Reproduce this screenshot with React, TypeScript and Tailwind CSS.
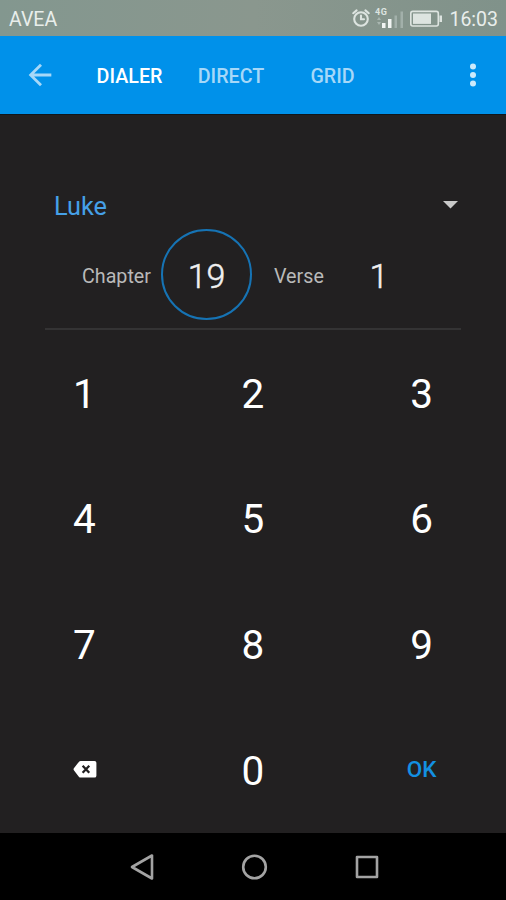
import React from "react";

const tabs = [
  { name: "DIALER", className: "w-[67px] text-white" },
  { name: "DIRECT", className: "ml-[34px] w-[68px] text-[#a6d8f8]" },
  { name: "GRID", className: "ml-[44px] w-[47px] text-[#a6d8f8]" },
];

const digits = ["1", "2", "3", "4", "5", "6", "7", "8", "9"];

function StatusBar() {
  return (
    <div className="flex h-9 items-center bg-linear-to-r from-[#83978f] via-[#8a978e] to-[#80928a] pl-[9px] pr-2 pt-[2px] text-[#e9eeeb]">
      <span className="pt-[2px] text-[19.5px] leading-none">AVEA</span>
      <svg className="ml-auto" width="92" height="24" viewBox="0 0 92 24">
        <g fill="none" stroke="#dde4e0" strokeWidth="2.1" strokeLinecap="round">
          <circle cx="10" cy="12" r="6.8" />
          <path d="M2.2 6.2 5.6 3.4M17.8 6.2 14.4 3.4M10 8.5V12.2H13" />
        </g>
        <text
          x="24"
          y="8"
          fontSize="9"
          fontWeight="700"
          fill="#dde4e0"
          textLength="12"
        >
          4G
        </text>
        <path d="M26 13l2-3 2 3zM26 15l2 3 2-3z" fill="#a9b6b0" />
        <path d="M31 16h3.5v5H31z" fill="#f1f5f3" />
        <path d="M37 12h3.5v9H37z" fill="#f1f5f3" />
        <path d="M43.5 8.5H46V21h-2.5zM49.500 4.5H52V21h-2.5z" fill="#a2b0aa" />
        <rect
          x="59.8"
          y="4.4"
          width="27.5"
          height="14.6"
          rx="2"
          fill="none"
          stroke="#dde4e0"
          strokeWidth="1.6"
        />
        <path d="M62 6.5H80v10.4H62z" fill="#dde4e0" />
        <path d="M88.500 8.5h2.5v6.5h-2.500z" fill="#dde4e0" />
      </svg>
      <span className="ml-[6px] pt-[2px] text-[19.5px] leading-none">
        16:03
      </span>
    </div>
  );
}

function AppBar() {
  return (
    <div className="flex h-[79px] items-center border-b border-[#10161c] bg-[#0091ea]">
      <svg
        className="ml-[23px]"
        width="34"
        height="34"
        viewBox="0 0 24 24"
        fill="#a6d8f8"
      >
        <path d="M20 11H7.83l5.59-5.59L12 4l-8 8 8 8 1.41-1.41L7.83 13H20v-2z" />
      </svg>
      <div className="ml-[39px] flex pt-[3px] text-[19.7px] font-medium leading-6">
        {tabs.map((tab) => (
          <button key={tab.name} className={tab.className}>
            {tab.name}
          </button>
        ))}
      </div>
      <svg
        className="ml-auto mr-4"
        width="34"
        height="34"
        viewBox="0 0 34 34"
        fill="#cdeafb"
      >
        <circle cx="17" cy="8.5" r="3" />
        <circle cx="17" cy="17" r="3" />
        <circle cx="17" cy="25.5" r="3" />
      </svg>
    </div>
  );
}

function Reference() {
  return (
    <div className="mx-[45px] h-[215px] border-b-2 border-[#343334] pt-[74px]">
      <div className="flex h-[34px] items-center justify-between pl-[9px] pr-[3px]">
        <span className="pt-[2px] text-[25.3px] leading-none text-[#46a0e8]">
          Luke
        </span>
        <svg className="mb-[2px]" width="15" height="8" viewBox="0 0 15 8">
          <path d="M0 0h15L7.5 7.5z" fill="#c9c9c9" />
        </svg>
      </div>
      <div className="mt-[6px] flex h-[91px] items-center text-[19.7px] text-[#b9b9b9]">
        <span className="ml-[37px] w-[79px] pt-[4px]">Chapter</span>
        <div className="flex size-[91px] items-center justify-center rounded-full border-2 border-[#1673b4] pt-[4px] text-[34px] font-light text-[#f0f0f0] [-webkit-text-stroke:0.5px]">
          19
        </div>
        <span className="ml-[22px] w-[60px] pt-[4px]">Verse</span>
        <span className="w-[90px] pt-[4px] text-center text-[34px] font-light text-[#f0f0f0] [-webkit-text-stroke:0.5px]">
          1
        </span>
      </div>
    </div>
  );
}

function Keypad() {
  return (
    <div className="grid h-[503px] grid-cols-3 grid-rows-4 text-[40.5px] leading-none text-white">
      {digits.map((digit) => (
        <button key={digit} className="pt-[2px]">
          {digit}
        </button>
      ))}
      <button className="flex items-center justify-center pb-[2px] pl-[2px]">
        <svg width="24" height="19" viewBox="0 0 25 20">
          <path
            d="M8 1h14.5a2 2 0 0 1 2 2v13.5a2 2 0 0 1-2 2H8a2.5 2.5 0 0 1-2-1L.8 10.900a2 2 0 0 1 0-2.200L6 2a2.5 2.5 0 0 1 2-1z"
            fill="#fff"
          />
          <path
            d="M10 6l7 7.5M17 6l-7 7.5"
            stroke="#222021"
            strokeWidth="2.4"
          />
        </svg>
      </button>
      <button className="pt-[2px]">0</button>
      <button className="pb-[2px] text-[22.5px] font-medium text-[#1390e2]">
        OK
      </button>
    </div>
  );
}

function NavigationBar() {
  return (
    <div className="flex h-[67px] items-center bg-black pl-[128px]">
      <svg
        width="256"
        height="30"
        viewBox="0 0 256 30"
        fill="none"
        stroke="#a3a3a3"
        strokeWidth="2.6"
        strokeLinejoin="round"
      >
        <path d="M4 15 24 3.5V26.5z" />
        <circle cx="126.5" cy="15" r="11.3" />
        <rect x="229" y="5" width="20" height="20" />
      </svg>
    </div>
  );
}

function App() {
  return (
    <div className="flex h-[900px] w-[506px] flex-col overflow-hidden bg-[#222021] font-['Roboto',sans-serif]">
      <StatusBar />
      <AppBar />
      <Reference />
      <Keypad />
      <NavigationBar />
    </div>
  );
}

export default App;
